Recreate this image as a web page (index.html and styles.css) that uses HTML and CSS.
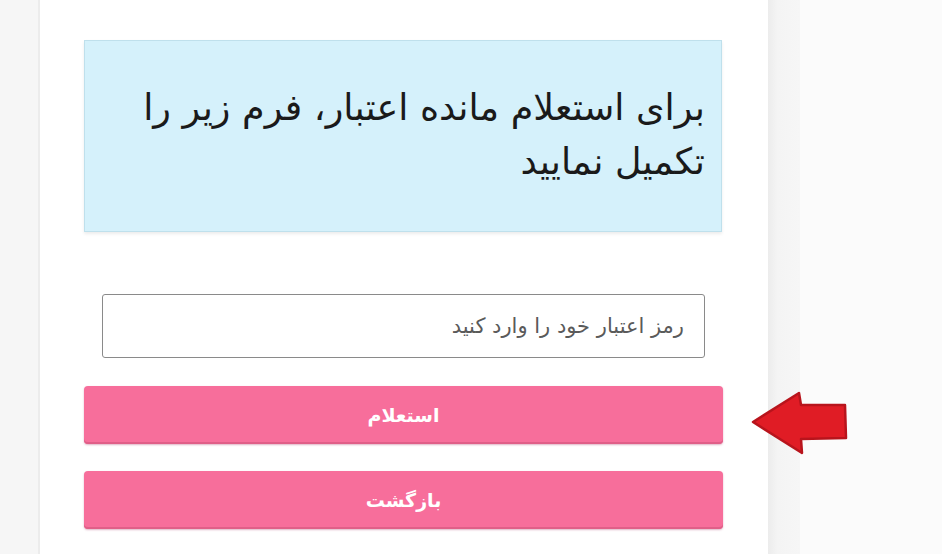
FILE: index.html
```html
<!DOCTYPE html>
<html lang="fa">
<head>
<meta charset="utf-8">
<link rel="stylesheet" href="styles.css">
</head>
<body>
<div class="page">
  <div class="gutter"></div>
  <main class="card" dir="rtl">
    <div class="alert">برای استعلام مانده اعتبار، فرم زیر را تکمیل نمایید</div>
    <div class="field">
      <input class="input" type="text" placeholder="رمز اعتبار خود را وارد کنید">
    </div>
    <button class="btn">استعلام</button>
    <button class="btn">بازگشت</button>
  </main>
  <div class="side-strip"></div>
  <div class="side"></div>
  <svg class="arrow" width="100" height="66" viewBox="0 0 100 66">
    <polygon points="2,31 48,2 50,14 94,14 95,47 50,48 51,62" fill="#e01c25" stroke="#b8141c" stroke-width="2.5" stroke-linejoin="round"/>
  </svg>
</div>
</body>
</html>
```

FILE: styles.css
```css
html, body {
  margin: 0;
  padding: 0;
  height: 100%;
}
body {
  background: #fafafa;
  font-family: "DejaVu Sans", "Noto Sans", sans-serif;
}
.page {
  position: relative;
  display: flex;
  height: 554px;
  overflow: hidden;
}
.gutter {
  width: 38px;
  flex: none;
  background: #f6f6f6;
  border-right: 2px solid #ececec;
}
.card {
  width: 728px;
  flex: none;
  background: #ffffff;
  box-sizing: border-box;
  padding: 40px 46px 0 44px;
  display: flex;
  flex-direction: column;
}
.side-strip {
  width: 32px;
  flex: none;
  background: linear-gradient(to right, #ececec, #f4f4f4 30%, #f6f6f6);
}
.side {
  flex: 1;
  background: #fbfbfb;
}
.alert {
  height: 192px;
  box-sizing: border-box;
  background: #d5f1fb;
  border: 1px solid #bfe0ec;
  box-shadow: 0 2px 3px rgba(0,0,0,0.08);
  padding: 40px 16px 0 30px;
  font-size: 36.5px;
  line-height: 54px;
  color: #1a1a1a;
}
.field {
  margin: 62px 17px 0 18px;
}
.input {
  display: block;
  width: 100%;
  height: 64px;
  box-sizing: border-box;
  border: 1px solid #8a8a8a;
  border-radius: 3px;
  padding: 0 20px;
  font-family: "DejaVu Sans", sans-serif;
  font-size: 21px;
  background: #fff;
  direction: rtl;
}
.input::placeholder {
  color: #5a5a5a;
}
.btn {
  display: block;
  width: 639px;
  height: 58px;
  margin-top: 28px;
  margin-right: -1px;
  border: none;
  border-radius: 4px;
  background: #f76e9b;
  box-shadow: inset 0 -2px 0 #e05f88, 0 1px 2px rgba(160,40,90,0.35);
  color: #fff;
  font-family: "DejaVu Sans", sans-serif;
  font-weight: bold;
  font-size: 19px;
}
.btn + .btn {
  margin-top: 27px;
}
.arrow {
  position: absolute;
  left: 751px;
  top: 391px;
}
```
